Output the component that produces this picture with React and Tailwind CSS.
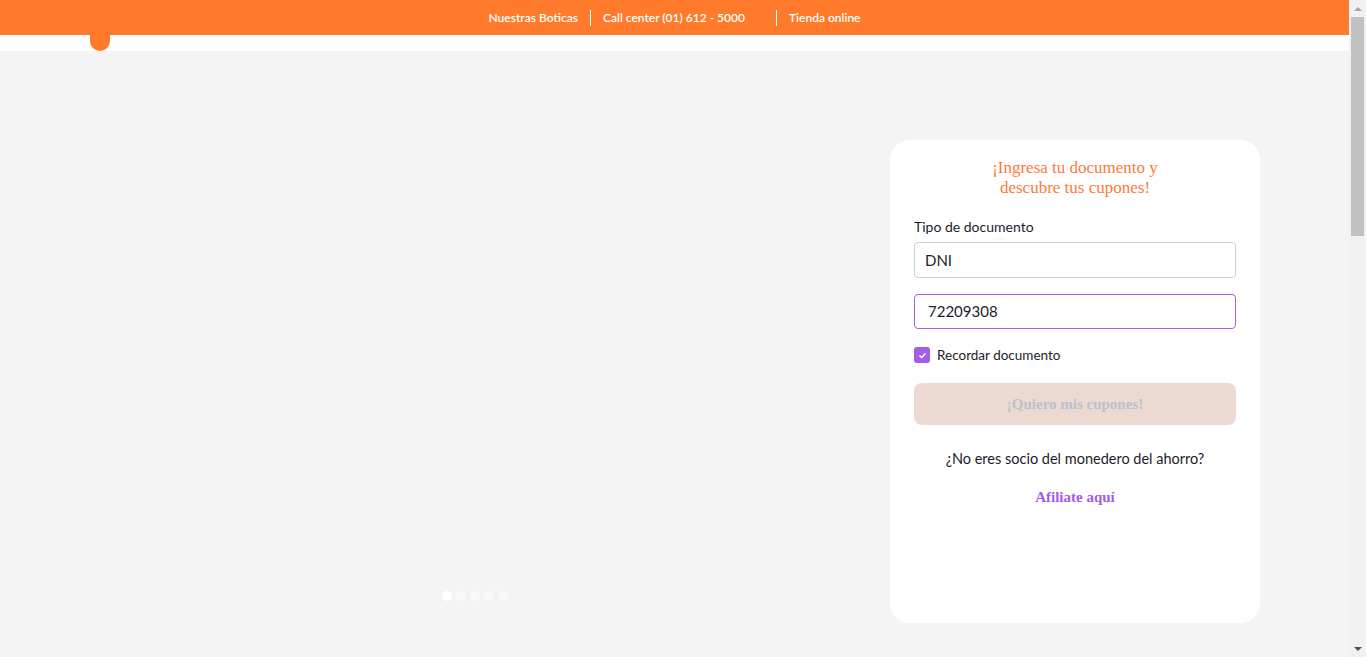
import { useState } from 'react';

const sans = { fontFamily: '"Lato", "Noto Sans", sans-serif' };
const serif = { fontFamily: '"Liberation Serif", serif' };

const TopBar = () => (
    <div className="h-[35px] bg-[#ff7a2a] flex items-center justify-center text-white text-[12px] font-semibold" style={sans}>
        <span className="pr-3">Nuestras Boticas</span>
        <span className="h-4 w-px bg-white"></span>
        <span className="pl-3 pr-[31px]">Call center (01) 612 - 5000</span>
        <span className="h-4 w-px bg-white"></span>
        <span className="pl-3">Tienda online</span>
    </div>
);

const Dots = () => (
    <div className="flex items-center gap-[4px]">
        <span className="w-[10px] h-[10px] rounded-full bg-white"></span>
        {[1, 2, 3, 4].map((i) => (
            <span key={i} className="w-[10px] h-[10px] rounded-full bg-[#f9f9f9]"></span>
        ))}
    </div>
);

const CouponCard = () => {
    const [remember, setRemember] = useState(true);

    return (
        <div className="w-[370px] h-[483px] shrink-0 bg-white rounded-[20px] px-6 pt-[18px] flex flex-col" style={sans}>
            <h2 className="text-center text-[17px] leading-[20px] text-[#ff7a3c]" style={serif}>
                ¡Ingresa tu documento y<br />descubre tus cupones!
            </h2>

            <label className="mt-[20px] text-[14px] leading-[18px] text-[#1c1c2a]">Tipo de documento</label>
            <div className="mt-[6px] h-[36px] border border-[#cfcfcf] rounded-[4px] flex items-center px-[10px] text-[15px] text-[#1c1c2a]">
                DNI
            </div>

            <div className="mt-[16px] h-[35px] border border-[#a45ee8] rounded-[4px] flex items-center px-[13px] text-[15px] text-[#1c1c2a]">
                72209308
            </div>

            <button
                onClick={() => setRemember(!remember)}
                className="mt-[16px] flex items-center gap-[7px] text-[13.5px] text-[#1c1c2a]"
            >
                <span className={`w-4 h-4 rounded-[3px] flex items-center justify-center ${remember ? 'bg-[#a35ce6]' : 'border border-gray-400'}`}>
                    {remember && (
                        <svg viewBox="0 0 12 12" className="w-[9px] h-[9px]">
                            <path d="M2.5 6.3 L5 8.6 L9.5 3.6" stroke="white" strokeWidth="2" fill="none" strokeLinecap="round" strokeLinejoin="round" />
                        </svg>
                    )}
                </span>
                Recordar documento
            </button>

            <div
                className="mt-[18px] h-[42px] rounded-[8px] bg-[#ecdad2] flex items-center justify-center text-[15px] font-bold text-[#b8c2cc]"
                style={serif}
            >
                ¡Quiero mis cupones!
            </div>

            <p className="mt-[23px] text-center text-[14.5px] text-[#1c1c2a]">¿No eres socio del monedero del ahorro?</p>
            <p className="mt-[16px] text-center text-[15px] font-bold text-[#a35ce6]" style={serif}>
                Afiliate aquí
            </p>
        </div>
    );
};

const Scrollbar = () => (
    <div className="w-[17px] h-full bg-[#f1f1f1] flex flex-col items-center">
        <div className="h-[17px] flex items-center justify-center">
            <svg viewBox="0 0 8 4" className="w-2 h-1"><path d="M0 4 L4 0 L8 4 Z" fill="#a3a3a3" /></svg>
        </div>
        <div className="w-[13px] h-[219px] bg-[#c1c1c1]"></div>
        <div className="flex-1"></div>
        <div className="h-[17px] flex items-center justify-center">
            <svg viewBox="0 0 8 4" className="w-2 h-1"><path d="M0 0 L8 0 L4 4 Z" fill="#505050" /></svg>
        </div>
    </div>
);

const App = () => (
    <div className="h-screen flex overflow-hidden bg-[#f4f4f4]">
        <div className="w-[1349px] shrink-0 flex flex-col">
            <TopBar />
            <div className="h-4 bg-white">
                <div className="ml-[90px] w-5 h-4 bg-[#ff7a2a] rounded-b-full"></div>
            </div>
            <div className="flex pt-[89px] px-[89px] gap-[29px]">
                <div className="flex-1 flex items-end justify-center pb-[22px]">
                    <Dots />
                </div>
                <CouponCard />
            </div>
        </div>
        <Scrollbar />
    </div>
);

export default App;
